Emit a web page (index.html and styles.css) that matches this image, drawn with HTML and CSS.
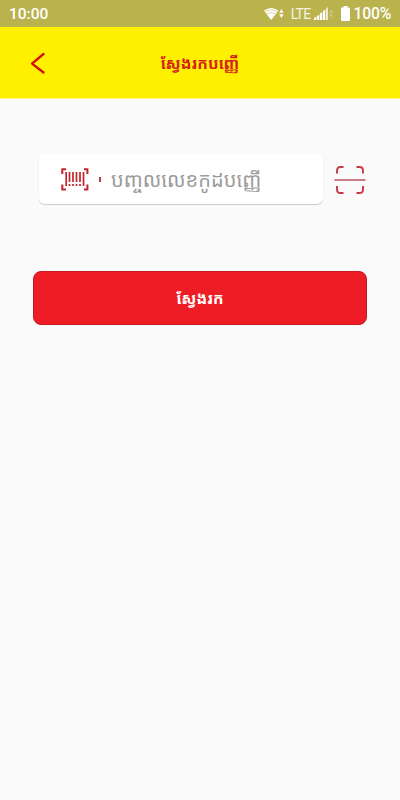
FILE: index.html
```html
<!DOCTYPE html>
<html lang="km">
<head>
  <meta charset="utf-8">
  <meta name="viewport" content="width=device-width, initial-scale=1">
  <title>ស្វែងរកបញ្ញើ</title>
  <link rel="stylesheet" href="styles.css">
</head>
<body>
  <div class="status-bar">
    <span class="time">10:00</span>
    <div class="status-icons">
      <svg class="wifi" width="21" height="14" viewBox="0 0 21 14">
        <path d="M0 3.700Q7.200 -1.800 14.400 3.700L7.200 13Z" fill="#fff"/>
        <path d="M1 5Q7.200 .8 13.400 5M2.600 7.300Q7.200 4 11.800 7.300" fill="none" stroke="#b9b24d" stroke-width=".5"/>
        <path d="M15.200 5.800l2.200-3.800 2.200 3.800zM15.200 7.200l2.200 3.800 2.200-3.800z" fill="#fff"/>
      </svg>
      <span class="lte">LTE</span>
      <svg class="signal" width="20" height="14" viewBox="0 0 20 14">
        <path d="M0 13v-2l2.300-1.500v3.500zM3 13V9l2.300-1.500V13zM6 13V6.500L8.300 5v8zM9 13V4l2.300-1.500V13z" fill="#fff"/>
        <path d="M12 13V1.600L14 0v13z" fill="#fff" opacity=".75"/>
        <path d="M15.500 5.800l1.700-3 1.700 3zM15.500 7.400l1.700 3 1.700-3z" fill="#fff" opacity=".35"/>
      </svg>
      <svg class="battery" width="9" height="15" viewBox="0 0 9 15">
        <path d="M2.500 0h4v1.500H8a1 1 0 0 1 1 1V14a1 1 0 0 1-1 1H1a1 1 0 0 1-1-1V2.500a1 1 0 0 1 1-1h1.500z" fill="#fff"/>
      </svg>
      <span class="percent">100%</span>
    </div>
  </div>

  <header class="header">
    <button class="back" aria-label="Back">
      <svg width="16" height="24" viewBox="0 0 16 24">
        <path d="M13.500 3L2 12.600L13.500 21.500" fill="none" stroke="#d01010" stroke-width="2.300" stroke-linecap="round" stroke-linejoin="round"/>
      </svg>
    </button>
    <h1 class="title">ស្វែងរកបញ្ញើ</h1>
  </header>

  <main class="content">
    <div class="search-row">
      <label class="search-box">
        <svg class="barcode" width="28" height="23" viewBox="0 0 28 23">
          <path d="M5 1.200H1.300V6M23 1.200h3.400V6M5 21.500H1.300V16.500M23 21.500h3.400V16.500" fill="none" stroke="#c4242c" stroke-width="2"/>
          <path d="M5.200 4v14M8.500 4v10M12 4v10M15.500 4v10M19 4v10M22.500 4v14M8.500 16v2M12 16v2M15.500 16v2M19 16v2" fill="none" stroke="#c4242c" stroke-width="1.700"/>
        </svg>
        <span class="divider"></span>
        <input class="code-input" type="text" placeholder="បញ្ចូលលេខកូដបញ្ញើ">
      </label>
      <button class="scan" aria-label="Scan">
        <svg width="32" height="30" viewBox="0 0 32 30">
          <path d="M3 8.500V5.500Q3 2 6.500 2H9.500M22.500 2h3Q29 2 29 5.500V8.500M3 21v3.500Q3 28 6.500 28H9.500M22.500 28h3Q29 28 29 24.500V21" fill="none" stroke="#c43a48" stroke-width="1.900"/>
          <path d="M.5 15h31" stroke="#c97780" stroke-width="1.900"/>
        </svg>
      </button>
    </div>
    <button class="submit">ស្វែងរក</button>
  </main>
</body>
</html>
```
FILE: styles.css
```css
* { box-sizing: border-box; }
body {
  margin: 0;
  min-height: 100vh;
  background: #fafafa;
  font-family: Roboto, "Noto Sans Khmer", "Noto Sans", sans-serif;
}
button { border: none; background: none; padding: 0; font-family: inherit; }
svg { display: block; flex: none; }

.status-bar {
  display: flex;
  justify-content: space-between;
  align-items: center;
  height: 27px;
  padding: 0 9px;
  background: #b9b24d;
  color: #fff;
  font-size: 16px;
}
.time, .percent { font-size: 15.7px; font-weight: 500; }
.time { font-size: 15.5px; }
.percent { letter-spacing: -0.2px; }
.status-icons { display: flex; align-items: center; }
.lte { margin: 0 3px 0 6px; font-size: 14px; letter-spacing: -0.7px; opacity: 0.85; }
.battery { margin: 0 4px 0 7px; }

.header {
  display: grid;
  grid-template-columns: 60px 1fr 60px;
  align-items: center;
  height: 72px;
  background: #fff000;
  border-bottom: 1px solid #fff68a;
}
.back { justify-self: end; margin-right: 14px; }
.title {
  margin: 0;
  color: #d5201c;
  font-size: 15.7px;
  font-weight: 700;
  text-align: center;
  white-space: nowrap;
}

.content { padding: 55px 33px 0; }
.search-row { display: flex; align-items: center; padding-left: 6px; }
.search-box {
  display: flex;
  align-items: center;
  width: 284px;
  height: 50px;
  padding: 0 22px;
  background: #fff;
  border-radius: 6px;
  box-shadow: 0 1px 1px rgba(0, 0, 0, 0.2);
}
.divider { flex: none; width: 2px; height: 5px; margin: 0 10px; background: #b94248; }
.code-input {
  flex: 1;
  min-width: 0;
  height: 50px;
  padding: 2px 0 0;
  border: none;
  outline: none;
  background: none;
  font-family: inherit;
  font-size: 20px;
  line-height: 48px;
}
.code-input::placeholder { color: #9b9b9b; opacity: 1; line-height: 48px; }
.scan { flex: none; margin: 2px 0 0 11px; }

.submit {
  display: block;
  width: 100%;
  height: 54px;
  margin-top: 67px;
  border: 1px solid #c41822;
  border-radius: 8px;
  background: #ee1c25;
  color: #fff;
  font-size: 15.6px;
  font-weight: 700;
}
```
